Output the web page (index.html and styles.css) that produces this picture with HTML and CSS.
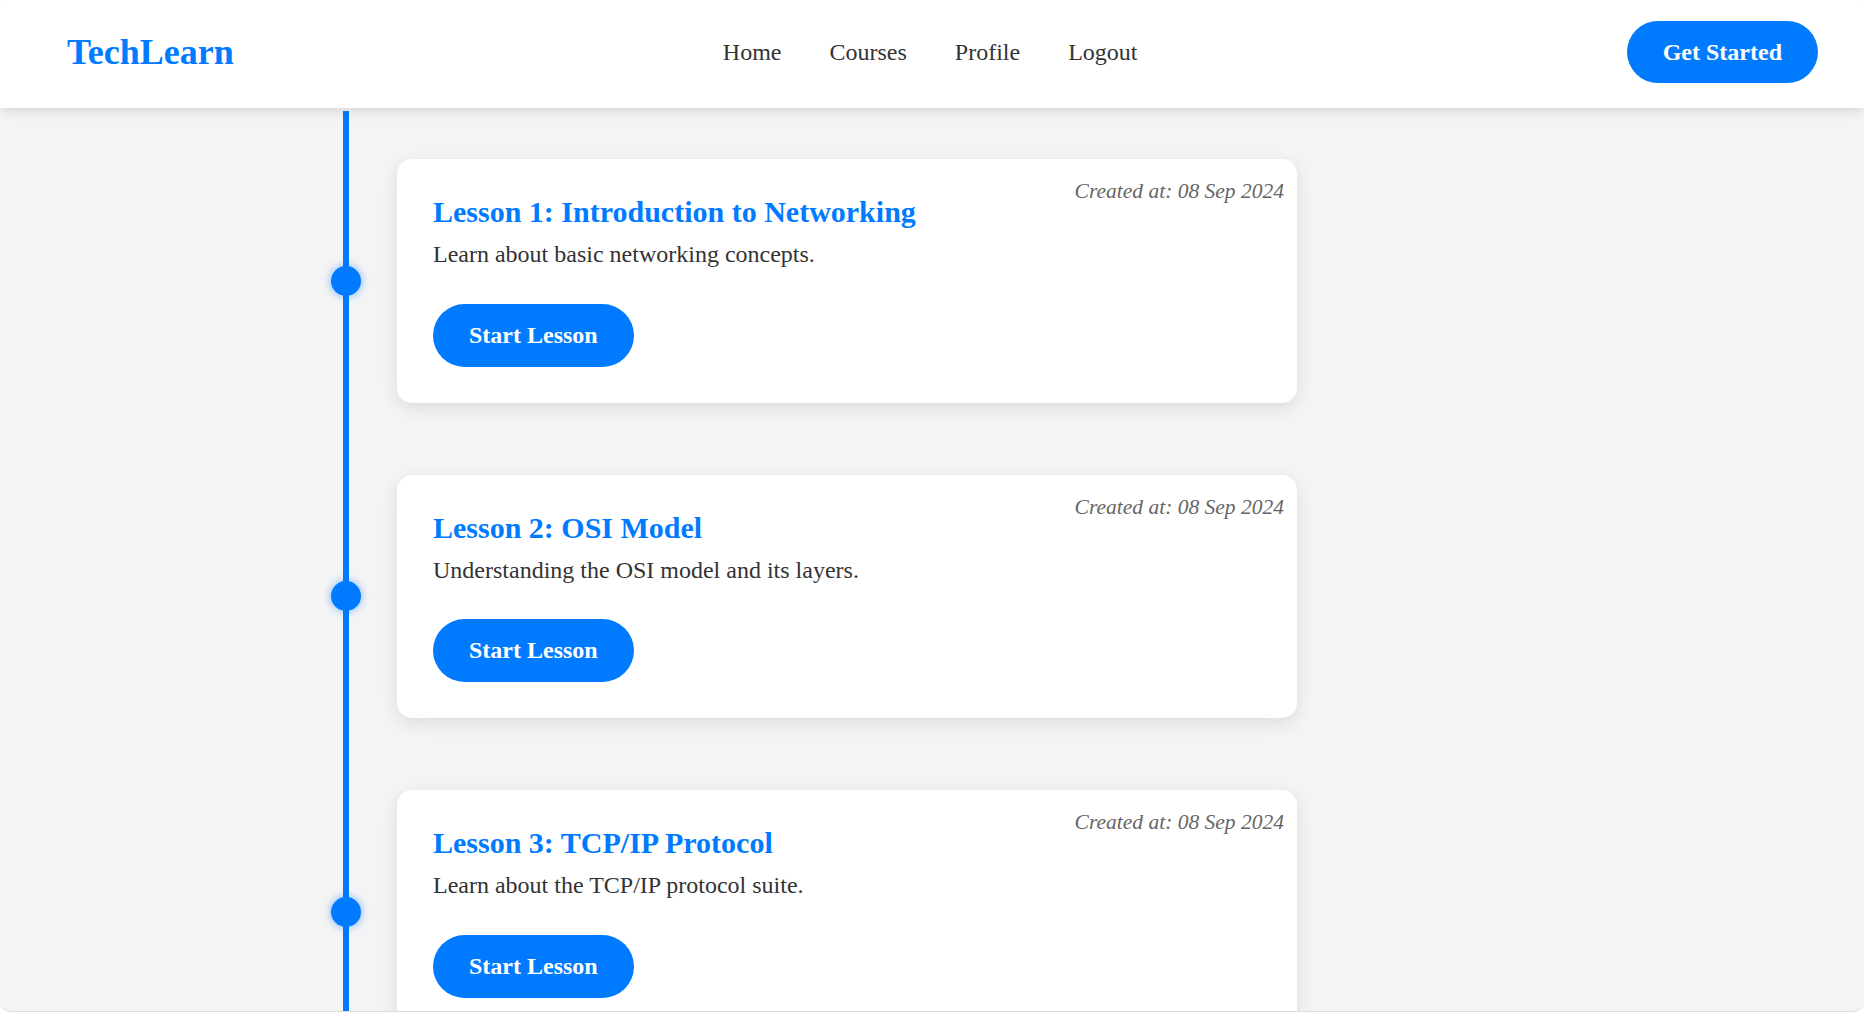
FILE: index.html
```html
<!DOCTYPE html>
<html lang="en">
<head>
<meta charset="utf-8">
<title>TechLearn</title>
<link rel="stylesheet" href="styles.css">
</head>
<body>
<div class="frame">
  <header class="header">
    <div class="logo">TechLearn</div>
    <nav class="nav">
      <a href="#">Home</a>
      <a href="#">Courses</a>
      <a href="#">Profile</a>
      <a href="#">Logout</a>
    </nav>
    <a class="btn btn-header" href="#">Get Started</a>
  </header>
  <main class="main">
    <div class="timeline">
      <div class="item">
        <span class="dot"></span>
        <div class="card">
          <span class="date">Created at: 08 Sep 2024</span>
          <h2 class="title">Lesson 1: Introduction to Networking</h2>
          <p class="desc">Learn about basic networking concepts.</p>
          <a class="btn" href="#">Start Lesson</a>
        </div>
      </div>
      <div class="item">
        <span class="dot"></span>
        <div class="card">
          <span class="date">Created at: 08 Sep 2024</span>
          <h2 class="title">Lesson 2: OSI Model</h2>
          <p class="desc">Understanding the OSI model and its layers.</p>
          <a class="btn" href="#">Start Lesson</a>
        </div>
      </div>
      <div class="item">
        <span class="dot"></span>
        <div class="card">
          <span class="date">Created at: 08 Sep 2024</span>
          <h2 class="title">Lesson 3: TCP/IP Protocol</h2>
          <p class="desc">Learn about the TCP/IP protocol suite.</p>
          <a class="btn" href="#">Start Lesson</a>
        </div>
      </div>
    </div>
  </main>
</div>
</body>
</html>
```

FILE: styles.css
```css
* { box-sizing: border-box; }

html, body {
  margin: 0;
  padding: 0;
  background: #ffffff;
}

body {
  font-family: "Liberation Serif", "Times New Roman", serif;
  color: #333333;
}

.frame {
  height: 1012px;
  overflow: hidden;
  background: #f4f4f4;
  border-radius: 10px;
  border-bottom: 1px solid #dcdcdc;
  display: flex;
  flex-direction: column;
}

.header {
  position: relative;
  z-index: 2;
  background: #ffffff;
  height: 108px;
  flex: none;
  padding: 0 46px 4px 67px;
  display: flex;
  justify-content: space-between;
  align-items: center;
  box-shadow: 0 3px 12px rgba(0, 0, 0, 0.12);
}

.logo {
  font-size: 36px;
  font-weight: bold;
  color: #007bff;
}

.nav {
  display: flex;
  gap: 48px;
}

.nav a {
  font-size: 24px;
  color: #333333;
  text-decoration: none;
}

.btn {
  display: inline-block;
  background: #007bff;
  color: #ffffff;
  font-weight: bold;
  font-size: 24px;
  text-decoration: none;
  padding: 18px 36px;
  border-radius: 40px;
}

.btn-header {
  padding: 17.5px 36px;
}

.main {
  flex: 1;
  padding-top: 3px;
}

.timeline {
  margin-left: 343px;
  width: 954px;
  height: 100%;
  border-left: 6px solid #007bff;
  padding: 48px 0 0 48px;
  display: flex;
  flex-direction: column;
  gap: 72px;
}

.item {
  position: relative;
}

.dot {
  position: absolute;
  left: -66px;
  top: 50%;
  width: 30px;
  height: 30px;
  margin-top: -15px;
  border-radius: 50%;
  background: #007bff;
  box-shadow: 0 0 8px rgba(0, 123, 255, 0.55);
}

.card {
  position: relative;
  background: #ffffff;
  border-radius: 15px;
  padding: 36px;
  box-shadow: 0 5px 18px rgba(0, 0, 0, 0.1);
}

.date {
  position: absolute;
  top: 20px;
  right: 13px;
  font-size: 21.5px;
  font-style: italic;
  color: #666666;
}

.title {
  margin: 0 0 12px;
  font-size: 30px;
  font-weight: bold;
  color: #007bff;
}

.desc {
  margin: 0 0 35.5px;
  font-size: 24px;
  color: #333333;
}
```
